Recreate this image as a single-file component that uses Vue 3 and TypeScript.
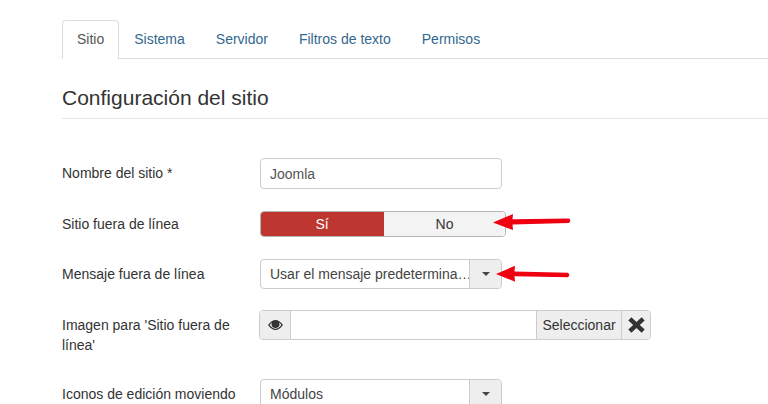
<template>
  <div class="page">
    <ul class="tabs">
      <li v-for="(tab, i) in tabs" :key="tab" class="tab" :class="{ 'tab--active': i === 0 }">{{ tab }}</li>
    </ul>

    <h2 class="title">Configuración del sitio</h2>

    <div class="form">
      <div class="row row--name">
        <label class="label">Nombre del sitio *</label>
        <input class="input" type="text" value="Joomla" />
      </div>

      <div class="row row--offline">
        <label class="label">Sitio fuera de línea</label>
        <div class="control">
          <div class="toggle">
            <span class="toggle__on">Sí</span>
            <span class="toggle__off">No</span>
          </div>
          <svg class="arrow arrow--first" width="80" height="20" viewBox="0 0 80 20">
            <path d="M0 10.5 L20 2 L19.5 7.2 L76 6.5 Q78.5 8.7 76 10.9 L19.5 12.4 L20 18 Z" fill="#ee0010" />
          </svg>
        </div>
      </div>

      <div class="row row--message">
        <label class="label">Mensaje fuera de línea</label>
        <div class="control">
          <div class="select">
            <span class="select__text">Usar el mensaje predetermina…</span>
            <span class="select__btn"><i class="caret"></i></span>
          </div>
          <svg class="arrow arrow--second" width="76" height="20" viewBox="0 0 76 20">
            <path d="M0 10 L19 1.7 L18.5 7.4 L72 8.8 Q74.5 11 72 13.2 L18.5 12.3 L19 17.7 Z" fill="#ee0010" />
          </svg>
        </div>
      </div>

      <div class="row row--image">
        <label class="label label--wrap">Imagen para 'Sitio fuera de línea'</label>
        <div class="media">
          <span class="media__eye">
            <svg width="15" height="10" viewBox="0 0 15 10">
              <path fill-rule="evenodd" d="M0 5 C2.5 1.5 5 0 7.5 0 C10 0 12.5 1.5 15 5 C12.5 8.5 10 10 7.5 10 C5 10 2.5 8.5 0 5 Z M1.6 5 C3.4 7.4 5.4 8.8 7.5 8.8 C9.6 8.8 11.6 7.4 13.4 5 C12.6 3.9 11.8 3 11 2.4 C11.3 3 11.5 3.7 11.5 4.4 C11.5 6.5 9.7 8 7.5 8 C5.3 8 3.5 6.5 3.5 4.4 C3.5 3.7 3.7 3 4 2.4 C3.2 3 2.4 3.9 1.6 5 Z" fill="#333" />
              <circle cx="7.5" cy="4.4" r="2.9" fill="#333" />
            </svg>
          </span>
          <span class="media__field"></span>
          <span class="media__pick">Seleccionar</span>
          <span class="media__clear">
            <svg width="17" height="16" viewBox="0 0 17 16">
              <path d="M3.4 0.3 L8.5 5 L13.6 0.3 L16.7 3.4 L11.8 8 L16.7 12.6 L13.6 15.7 L8.5 11 L3.4 15.7 L0.3 12.6 L5.2 8 L0.3 3.4 Z" fill="#333" />
            </svg>
          </span>
        </div>
      </div>

      <div class="row row--icons">
        <label class="label">Iconos de edición moviendo</label>
        <div class="select select--last">
          <span class="select__text">Módulos</span>
          <span class="select__btn"><i class="caret"></i></span>
        </div>
      </div>
    </div>
  </div>
</template>

<script setup lang="ts">
const tabs: string[] = ['Sitio', 'Sistema', 'Servidor', 'Filtros de texto', 'Permisos']
</script>

<style>
html, body { margin: 0; background: #fff; overflow: hidden; }
</style>

<style scoped>
.page { width: 768px; height: 404px; overflow: hidden; padding: 20px 0 0 62px; box-sizing: border-box; font-family: "Liberation Sans", Arial, sans-serif; font-size: 14px; color: #333; }
.tabs { display: flex; margin: 0; padding: 0; list-style: none; border-bottom: 1px solid #ddd; height: 38px; }
.tab { padding: 9px 14px; height: 38px; box-sizing: border-box; line-height: 18px; margin-right: 1px; color: #33688f; border: 1px solid transparent; border-bottom: 0; }
.tab--active { color: #555; background: #fff; border-color: #ddd; border-radius: 4px 4px 0 0; height: 39px; margin-right: 0; }
.title { margin: 27px 0 0; padding-bottom: 8px; height: 24px; line-height: 24px; font-size: 21px; font-weight: 400; color: #333; border-bottom: 1px solid #e5e5e5; }
.form { display: flex; flex-direction: column; }
.row { display: flex; }
.row--name { margin-top: 39px; height: 31px; }
.row--offline { margin-top: 22px; height: 26px; }
.row--message { margin-top: 22px; height: 30px; }
.row--image { margin-top: 21px; height: 30px; }
.row--icons { margin-top: 39px; height: 30px; }
.label { width: 198px; flex: none; line-height: 20px; font-size: 14px; color: #333; padding-top: 5px; }
.row--offline .label { padding-top: 3px; }
.label--wrap { padding-top: 5px; }
.control { display: flex; align-items: center; position: relative; }
.input { width: 242px; height: 31px; box-sizing: border-box; padding: 0 9px; border: 1px solid #ccc; border-radius: 4px; font: 14px "Liberation Sans", Arial, sans-serif; color: #555; }
.toggle { display: flex; width: 246px; height: 26px; box-sizing: border-box; line-height: 24px; text-align: center; border: 1px solid #b5b5b5; border-radius: 4px; overflow: hidden; }
.toggle__on { width: 124px; flex: none; margin: -1px 0 -1px -1px; line-height: 26px; background: #bd362f; color: #fff; }
.toggle__off { flex: 1; background: #f3f3f3; color: #333; }
.select { display: flex; width: 242px; height: 30px; box-sizing: border-box; border: 1px solid #ccc; border-radius: 4px; overflow: hidden; background: #fff; }
.select__text { flex: 1; min-width: 0; padding-left: 9px; line-height: 28px; color: #444; white-space: nowrap; }
.select__btn { width: 31px; flex: none; display: flex; align-items: center; justify-content: center; background: #eee; border-left: 1px solid #ccc; }
.caret { display: block; width: 0; height: 0; border-left: 4px solid transparent; border-right: 4px solid transparent; border-top: 4px solid #444; }
.arrow { position: absolute; top: 50%; margin-top: -10px; }
.arrow--first { left: 233px; margin-top: -12px; }
.arrow--second { left: 236px; }
.media { display: flex; margin-left: -1px; width: 392px; height: 30px; box-sizing: border-box; border: 1px solid #ccc; border-radius: 4px; overflow: hidden; }
.media__eye { width: 31px; flex: none; display: flex; align-items: center; justify-content: center; background: #eee; border-right: 1px solid #ccc; box-sizing: border-box; }
.media__field { flex: 1; background: #fff; }
.media__pick { width: 85px; flex: none; box-sizing: border-box; text-align: center; line-height: 28px; background: #eee; border-left: 1px solid #ccc; color: #333; }
.media__clear { width: 29px; flex: none; box-sizing: border-box; display: flex; align-items: center; justify-content: center; background: #eee; border-left: 1px solid #ccc; }
</style>
